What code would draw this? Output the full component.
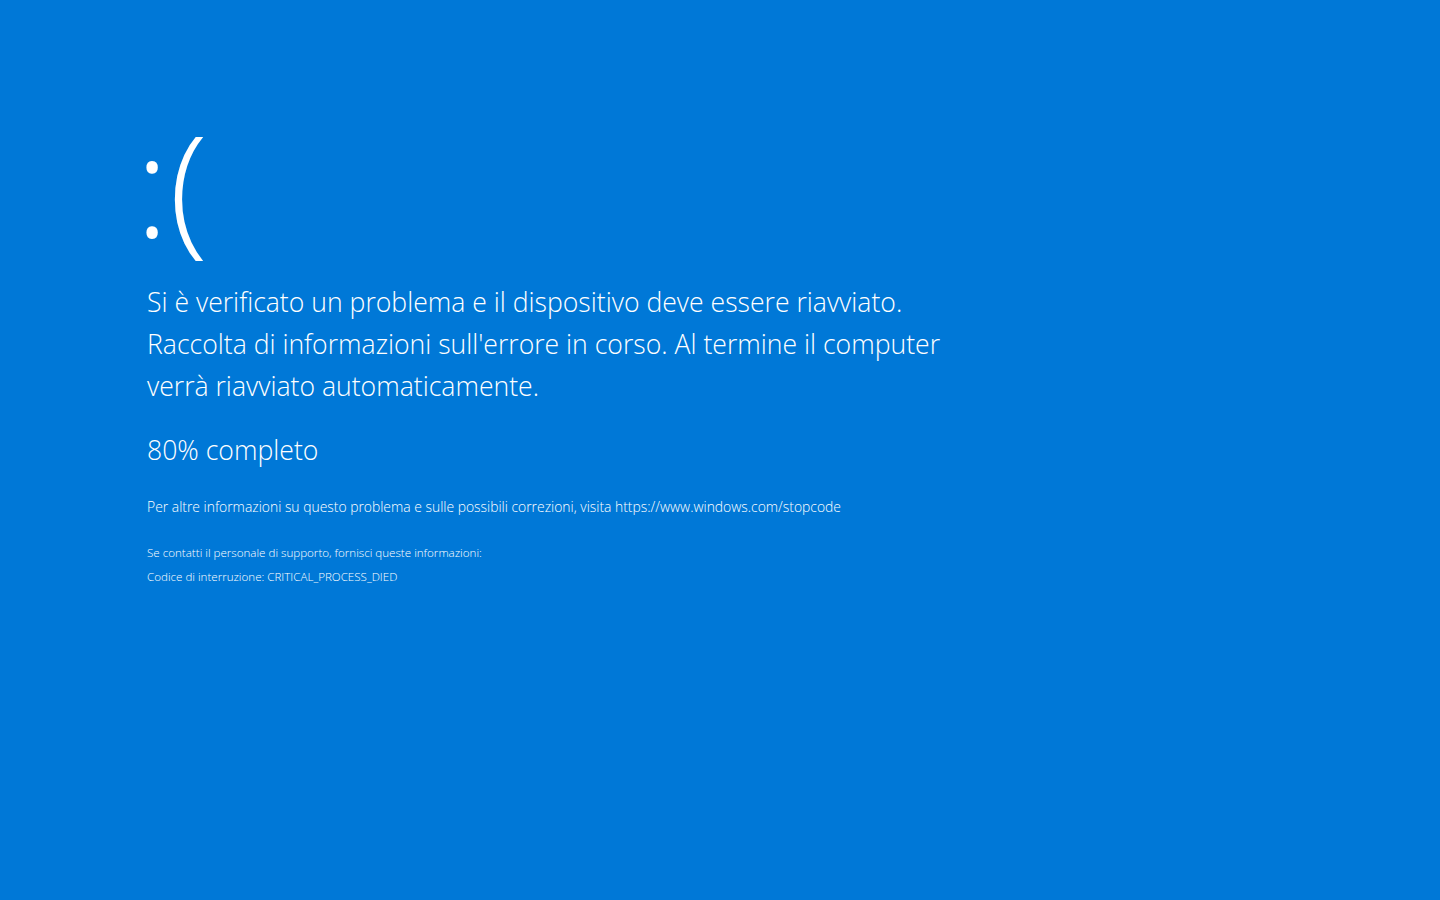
export default function App() {
  return (
    <div
      className="min-h-[900px] w-full bg-[#0078d7] text-white pl-[147px] pt-[85px]"
      style={{ fontFamily: '"Open Sans", "Noto Sans", sans-serif' }}
    >
      <div className="-ml-[12px] text-[143px] leading-[196px] font-light">:(</div>
      <div className="text-[26.6px] leading-[42px] font-light w-[900px]">
        <p>Si è verificato un problema e il dispositivo deve essere riavviato.</p>
        <p>Raccolta di informazioni sull'errore in corso. Al termine il computer</p>
        <p>verrà riavviato automaticamente.</p>
      </div>
      <p className="mt-[22px] text-[26.6px] leading-[42px] font-light">80% completo</p>
      <p className="mt-[26px] text-[13.9px] leading-[20px] font-light">
        Per altre informazioni su questo problema e sulle possibili correzioni, visita https://www.windows.com/stopcode
      </p>
      <p className="mt-[24px] text-[11.6px] leading-[24px] font-light">
        Se contatti il personale di supporto, fornisci queste informazioni:
      </p>
      <p className="text-[11.6px] leading-[24px] font-light">Codice di interruzione: CRITICAL_PROCESS_DIED</p>
    </div>
  );
}
